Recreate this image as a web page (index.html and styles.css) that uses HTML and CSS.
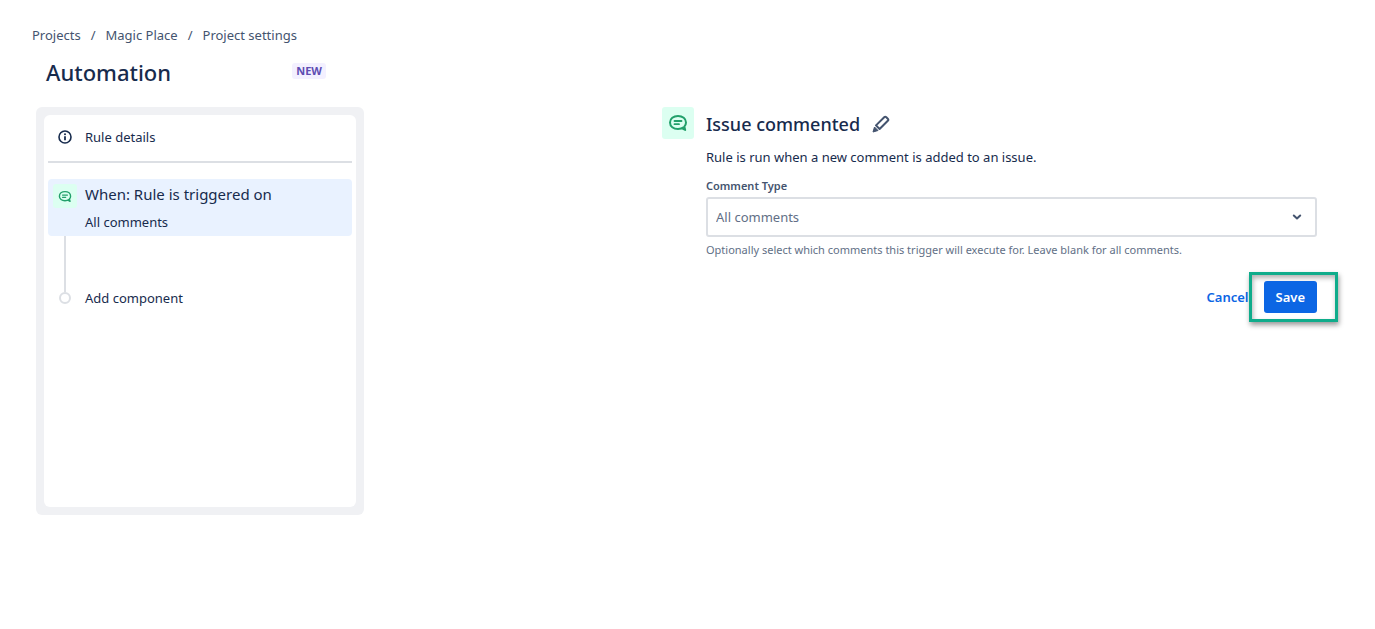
FILE: index.html
```html
<!DOCTYPE html>
<html lang="en">
<head>
<meta charset="utf-8">
<meta name="viewport" content="width=device-width, initial-scale=1">
<title>Automation</title>
<link rel="stylesheet" href="styles.css">
</head>
<body>
<svg class="sprite" aria-hidden="true">
  <symbol id="comment" viewBox="0 0 20 18">
    <path d="M15.6 13.3C14.2 14.4 12.2 15 10 15 5.400 15 2 12.300 2 8.500S5.400 2 10 2s8 2.700 8 6.500c0 1.600-.6 3-1.700 4.100l.9 3.400-3-1.700" fill="none" stroke="currentColor" stroke-width="2" stroke-linejoin="round" stroke-linecap="round"/>
    <path d="M6.500 7h7M6.500 10.200h4.500" fill="none" stroke="currentColor" stroke-width="1.800" stroke-linecap="round"/>
  </symbol>
</svg>
<header class="header">
  <nav aria-label="Breadcrumb">
    <ol class="crumbs">
      <li><a href="#">Projects</a></li>
      <li><a href="#">Magic Place</a></li>
      <li><a href="#">Project settings</a></li>
    </ol>
  </nav>
  <div class="title-row">
    <h1>Automation</h1>
    <span class="badge">NEW</span>
  </div>
</header>
<div class="layout">
  <aside class="panel">
    <div class="rule">
      <button class="details" type="button">
        <svg class="info" viewBox="0 0 14 14" aria-hidden="true"><circle cx="7" cy="7" r="6" fill="none" stroke="currentColor" stroke-width="1.600"/><path d="M7 6.300v4" stroke="currentColor" stroke-width="1.800"/><circle cx="7" cy="4.200" r="1" fill="currentColor"/></svg>
        <span>Rule details</span>
      </button>
      <button class="trigger" type="button">
        <span class="chip"><svg class="chip-icon"><use href="#comment"/></svg></span>
        <span class="trigger-text"><span class="trigger-name">When: Rule is triggered on</span><span>All comments</span></span>
      </button>
      <div class="line"></div>
      <button class="add" type="button"><span class="dot"></span><span>Add component</span></button>
    </div>
  </aside>
  <main class="editor">
    <span class="tile"><svg class="tile-icon"><use href="#comment"/></svg></span>
    <form class="form">
      <div class="heading">
        <h2>Issue commented</h2>
        <button class="edit" type="button" aria-label="Rename">
          <svg viewBox="0 0 18 18" aria-hidden="true"><path d="M4 10.400 12.200 2.200a1.500 1.500 0 0 1 2.100 0l1.500 1.500a1.500 1.500 0 0 1 0 2.100L7.600 14Z" fill="none" stroke="currentColor" stroke-width="2" stroke-linejoin="round"/><path d="M2.500 12 6 15.500 1 17Z" fill="currentColor" stroke="currentColor" stroke-linejoin="round"/></svg>
        </button>
      </div>
      <p class="summary">Rule is run when a new comment is added to an issue.</p>
      <label for="type">Comment Type</label>
      <div class="select">
        <select id="type"><option>All comments</option></select>
        <svg class="chevron" viewBox="0 0 10 8" aria-hidden="true"><path d="m1.800 2.500 3.200 3 3.200-3" fill="none" stroke="currentColor" stroke-width="2" stroke-linecap="round" stroke-linejoin="round"/></svg>
      </div>
      <p class="hint">Optionally select which comments this trigger will execute for. Leave blank for all comments.</p>
      <div class="actions">
        <button class="cancel" type="button">Cancel</button>
        <div class="save-wrap"><button class="save" type="submit">Save</button></div>
      </div>
    </form>
  </main>
</div>
</body>
</html>
```
FILE: styles.css
```css
* { box-sizing: border-box; }
body {
  margin: 0;
  background: #fff;
  color: #172b4d;
  font: 13px/20px "Noto Sans", "Open Sans", sans-serif;
}
h1, h2, p { margin: 0; }
button { font: inherit; color: inherit; border: 0; background: none; padding: 0; text-align: left; cursor: pointer; }
.sprite { position: absolute; width: 0; height: 0; }
.header { padding: 25px 32px 0; }
.crumbs { display: flex; list-style: none; margin: 0; padding: 0; color: #44546f; }
.crumbs li + li::before { content: "/"; padding: 0 10px; }
.crumbs a { color: inherit; text-decoration: none; }
.title-row { display: flex; justify-content: space-between; align-items: center; width: 294px; height: 28px; margin-top: 12px; padding-left: 14px; }
h1 { font-size: 22px; font-weight: 500; line-height: 28px; margin-top: 2px; }
.badge { padding: 0 4px; border-radius: 3px; background: #f3f0ff; color: #5e4db2; font-size: 11px; font-weight: 700; line-height: 16px; }
.layout { display: grid; grid-template-columns: 328px minmax(0, 655px); justify-content: space-between; align-items: start; padding: 22px 58px 0 36px; }
.panel { padding: 8px; border-radius: 6px; background: #f0f1f4; }
.rule { display: flex; flex-direction: column; min-height: 392px; padding: 0 4px; border-radius: 6px; background: #fff; }
.details { display: flex; align-items: center; gap: 13px; height: 48px; padding: 0 10px 3px; border-bottom: 2px solid #dcdfe4; }
.info { width: 14px; height: 14px; }
.trigger { display: flex; gap: 8px; margin-top: 16px; padding: 5px 5px 4px; border-radius: 4px; background: #e9f2ff; }
.chip { display: grid; place-items: center; width: 24px; height: 24px; border-radius: 3px; background: #dcfff1; color: #22a06b; }
.chip-icon { width: 14px; height: 13px; }
.trigger-text { display: flex; flex-direction: column; gap: 8px; }
.trigger-name { font-size: 15px; }
.line { width: 2px; height: 56px; margin-left: 16px; background: #dcdfe4; }
.add { display: flex; align-items: center; gap: 14px; margin-top: -4px; padding-left: 11px; }
.dot { width: 12px; height: 12px; border: 2px solid #dcdfe4; border-radius: 50%; background: #fff; }
.editor { display: flex; gap: 12px; }
.tile { display: grid; place-items: center; flex: none; width: 32px; height: 32px; border-radius: 3px; background: #dcfff1; color: #22a06b; }
.tile-icon { width: 20px; height: 18px; }
.form { flex: 1; min-width: 0; }
.heading { display: flex; align-items: center; gap: 12px; height: 34px; }
h2 { font-size: 18px; font-weight: 500; line-height: 28px; }
.edit { display: grid; width: 18px; height: 18px; color: #44546f; }
.summary { margin-top: 6px; }
label { display: block; margin-top: 11px; color: #44546f; font-size: 11px; font-weight: 600; line-height: 16px; }
.select { position: relative; margin-top: 3px; }
select { appearance: none; display: block; width: 100%; height: 40px; padding: 0 32px 0 8px; border: 2px solid #dcdfe4; border-radius: 3px; background: #fff; color: #626f86; font: inherit; }
.chevron { position: absolute; top: 16px; right: 15px; width: 10px; height: 8px; color: #44546f; pointer-events: none; }
.hint { margin-top: 5px; color: #626f86; font-size: 11px; line-height: 16px; }
.actions { display: flex; justify-content: flex-end; align-items: center; margin-top: 14px; margin-right: -21px; }
.cancel { color: #0c66e4; font-weight: 600; }
.save-wrap { padding: 6px 18px 6px 12px; border: 3px solid #0fac8b; box-shadow: 1px 3px 5px rgba(0, 0, 0, .4), inset 1px 3px 5px rgba(0, 0, 0, .3); }
.save { display: block; height: 32px; padding: 0 12px; border-radius: 3px; background: #0c66e4; color: #fff; font-weight: 600; }
```
